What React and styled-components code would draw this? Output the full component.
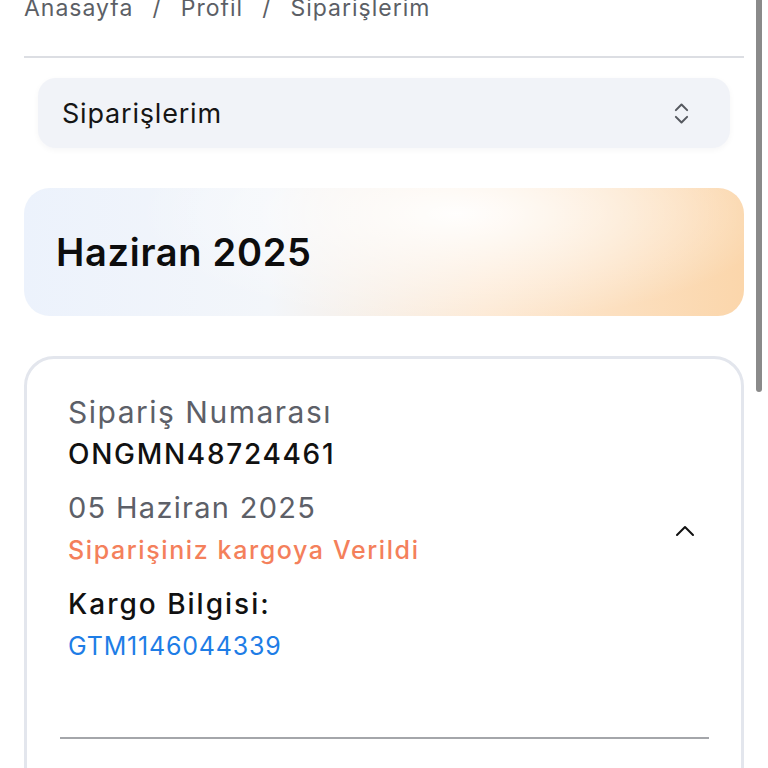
import styled, { createGlobalStyle } from "styled-components";
import { ChevronsUpDown } from "lucide-react";

const GlobalStyle = createGlobalStyle`
  html, body {
    margin: 0;
    padding: 0;
    background: #ffffff;
    overflow: hidden;
  }
  body {
    font-family: Inter, "Noto Sans", sans-serif;
    color: #111111;
  }
`;

const Page = styled.div`
  width: 720px;
  padding: 0 24px;
  margin-top: -10px;
`;

const Breadcrumb = styled.nav`
  display: flex;
  align-items: center;
  gap: 19px;
  font-size: 23px;
  letter-spacing: 1px;
  line-height: 36px;
  color: #5c5f66;
  padding-bottom: 30px;
  border-bottom: 2px solid #dcdee3;
`;

const Select = styled.div`
  display: flex;
  align-items: center;
  justify-content: space-between;
  margin: 20px 14px 0 14px;
  height: 70px;
  padding: 0 35px 0 24px;
  background: #f1f3f8;
  border-radius: 18px;
  box-shadow: 0 2px 6px rgba(20, 30, 60, 0.04);
  font-size: 27px;
  letter-spacing: 0.8px;
  color: #151515;
  svg {
    color: #55585f;
  }
`;

const MonthBanner = styled.div`
  margin-top: 40px;
  height: 128px;
  display: flex;
  align-items: center;
  padding: 0 32px;
  border-radius: 26px;
  background:
    radial-gradient(ellipse 320px 110px at 60% 20%, rgba(255, 255, 255, 0.95), rgba(255, 255, 255, 0)),
    linear-gradient(90deg, #ecf2fc 0%, #f3f6fa 34%, #fde9d4 64%, #fbd6ab 100%);
  font-size: 38px;
  letter-spacing: 0.7px;
  font-weight: 600;
  color: #0d0d0d;
`;

const OrderCard = styled.div`
  margin-top: 40px;
  border: 3px solid #e3e6ed;
  border-radius: 30px;
  padding: 32px 32px 80px 33px;
`;

const OrderRow = styled.div`
  display: flex;
  align-items: center;
  justify-content: space-between;
  padding: 0 14px 70px 8px;
  border-bottom: 2px solid #a4a6aa;
`;

const OrderInfo = styled.div`
  display: flex;
  flex-direction: column;
  gap: 12px;
`;

const Group = styled.div`
  display: flex;
  flex-direction: column;
`;

const Line = styled.div`
  font-size: ${(p) => p.$size || 27}px;
  line-height: 42px;
  font-weight: ${(p) => p.$weight || 400};
  color: ${(p) => p.$color || "#111111"};
  letter-spacing: ${(p) => p.$spacing || 0}px;
  white-space: nowrap;
`;

const Toggle = styled.div`
  display: flex;
  margin-top: 4px;
`;

const ScrollThumb = styled.div`
  position: fixed;
  top: 0;
  left: 756px;
  width: 6px;
  height: 392px;
  background: #8a8a8a;
  border-radius: 0 0 3px 3px;
`;

export default function App() {
  return (
    <>
      <GlobalStyle />
      <Page>
        <Breadcrumb>
          <span>Anasayfa</span>
          <span>/</span>
          <span>Profil</span>
          <span>/</span>
          <span>Siparişlerim</span>
        </Breadcrumb>
        <Select>
          <span>Siparişlerim</span>
          <ChevronsUpDown size={27} strokeWidth={1.8} />
        </Select>
        <MonthBanner>Haziran 2025</MonthBanner>
        <OrderCard>
          <OrderRow>
            <OrderInfo>
              <Group>
                <Line $color="#5d6068" $size={30} $spacing={1.5}>Sipariş Numarası</Line>
                <Line $weight={500} $size={28} $spacing={1.7}>ONGMN48724461</Line>
              </Group>
              <Group>
                <Line $color="#5d6068" $size={29} $spacing={1.3}>05 Haziran 2025</Line>
                <Line $color="#f4805b" $size={25} $weight={500} $spacing={1.6}>Siparişiniz kargoya Verildi</Line>
              </Group>
              <Group>
                <Line $weight={500} $size={28} $spacing={2}>Kargo Bilgisi:</Line>
                <Line $color="#1e7de6" $size={25} $spacing={0.8}>GTM1146044339</Line>
              </Group>
            </OrderInfo>
            <Toggle>
              <svg width="20" height="12" viewBox="0 0 20 12" fill="none">
                <polyline points="2,10 10,2 18,10" stroke="#111111" strokeWidth="2" strokeLinecap="round" strokeLinejoin="round" />
              </svg>
            </Toggle>
          </OrderRow>
        </OrderCard>
      </Page>
      <ScrollThumb />
    </>
  );
}
